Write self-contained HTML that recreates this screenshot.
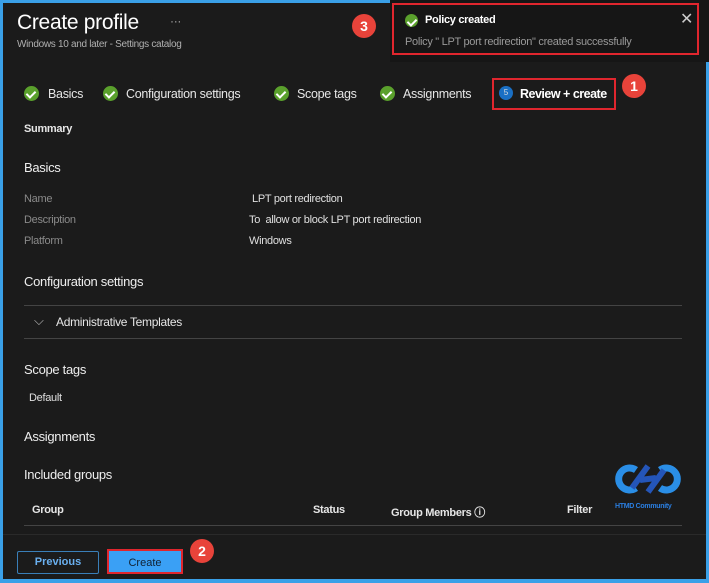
<!DOCTYPE html>
<html><head><meta charset="utf-8"><style>
*{margin:0;padding:0;box-sizing:border-box}
body{width:709px;height:583px;background:#3aa0e8;font-family:"Liberation Sans",sans-serif;position:relative;overflow:hidden;color:#e6e6e6}
.main{position:absolute;left:3px;top:3px;right:3px;bottom:4px;background:#1b1b1b}
.t{position:absolute;white-space:nowrap;letter-spacing:-0.3px}
.chk{position:absolute;width:15px;height:15px;border-radius:50%;background:#5aa02c}
.chk:after{content:"";position:absolute;left:4px;top:3px;width:4px;height:7px;border:solid #fff;border-width:0 2px 2px 0;transform:rotate(45deg)}
.badge{position:absolute;width:24px;height:24px;border-radius:50%;background:#e8433a;color:#fff;font-weight:bold;font-size:14px;text-align:center;line-height:24px}
.lbl{color:#8a8a8a;font-size:11px}
.val{color:#e0e0e0;font-size:11px}
.h{font-size:13px;color:#eee}
.line{position:absolute;height:1px;background:#444;left:24px;width:658px}
.red{position:absolute;border:2px solid #e0262e}
.st{font-size:12.5px}
</style></head><body>
<div class="main"></div>
<div class="t" style="left:17px;top:11px;font-size:21px;color:#fff">Create profile</div>
<div class="t" style="left:170px;top:14px;font-size:12px;color:#aaa">···</div>
<div class="t" style="left:17px;top:39px;font-size:10px;color:#b0b0b0">Windows 10 and later - Settings catalog</div>
<div class="badge" style="left:352px;top:14px">3</div>
<div style="position:absolute;left:390px;top:0;width:319px;height:62px;background:#161616"></div>
<div class="red" style="left:392px;top:3px;width:307px;height:52px"></div>
<div class="chk" style="left:405px;top:14px;width:13px;height:13px"></div>
<div class="t" style="left:425px;top:14px;font-size:11px;font-weight:bold;color:#fff">Policy created</div>
<div class="t" style="left:680px;top:9px;font-size:16px;color:#ccc">✕</div>
<div class="t" style="left:405px;top:36px;font-size:11px;color:#999">Policy " LPT port redirection" created successfully</div>

<div class="chk" style="left:24px;top:86px"></div><div class="t st" style="left:48px;top:87px">Basics</div>
<div class="chk" style="left:103px;top:86px"></div><div class="t st" style="left:126px;top:87px">Configuration settings</div>
<div class="chk" style="left:274px;top:86px"></div><div class="t st" style="left:297px;top:87px">Scope tags</div>
<div class="chk" style="left:380px;top:86px"></div><div class="t st" style="left:403px;top:87px">Assignments</div>
<div class="red" style="left:492px;top:78px;width:124px;height:32px"></div>
<div style="position:absolute;left:499px;top:86px;width:14px;height:14px;border-radius:50%;background:#1a6fc4;color:#ddd;font-size:8px;text-align:center;line-height:14px">5</div>
<div class="t" style="left:520px;top:87px;font-size:12.5px;font-weight:bold;color:#fff;letter-spacing:-0.5px">Review + create</div>
<div class="badge" style="left:622px;top:74px">1</div>

<div class="t" style="left:24px;top:123px;font-size:11px;font-weight:bold">Summary</div>
<div class="t h" style="left:24px;top:160px">Basics</div>
<div class="t lbl" style="left:24px;top:193px">Name</div><div class="t val" style="left:252px;top:193px">LPT port redirection</div>
<div class="t lbl" style="left:24px;top:214px">Description</div><div class="t val" style="left:249px;top:214px">To &nbsp;allow or block LPT port redirection</div>
<div class="t lbl" style="left:24px;top:235px">Platform</div><div class="t val" style="left:249px;top:235px">Windows</div>
<div class="t h" style="left:24px;top:274px">Configuration settings</div>
<div class="line" style="top:305px"></div>
<div class="t" style="left:34px;top:313px;font-size:13px;color:#bbb">⌵</div>
<div class="t" style="left:56px;top:315px;font-size:12px">Administrative Templates</div>
<div class="line" style="top:338px"></div>
<div class="t h" style="left:24px;top:362px">Scope tags</div>
<div class="t val" style="left:29px;top:392px">Default</div>
<div class="t h" style="left:24px;top:429px">Assignments</div>
<div class="t h" style="left:24px;top:467px">Included groups</div>
<div class="t" style="left:32px;top:504px;font-size:11px;font-weight:bold">Group</div>
<div class="t" style="left:313px;top:504px;font-size:11px;font-weight:bold">Status</div>
<div class="t" style="left:391px;top:504px;font-size:11px;font-weight:bold">Group Members ⓘ</div>
<div class="t" style="left:567px;top:504px;font-size:11px;font-weight:bold">Filter</div>
<div class="line" style="top:525px"></div>
<svg style="position:absolute;left:614px;top:460px" width="70" height="40" viewBox="0 0 70 40">
<path d="M22 10 A11 11 0 1 0 22 28" fill="none" stroke="#2a8ee6" stroke-width="7"/>
<path d="M46 10 A11 11 0 1 1 46 28" fill="none" stroke="#2a8ee6" stroke-width="7"/>
<path d="M18 28 L34 6 M34 32 L50 10 M26 20 L42 18" stroke="#2455b8" stroke-width="6"/>
</svg>
<div class="t" style="left:615px;top:503px;font-size:7px;font-weight:bold;color:#2a7ee0">HTMD Community</div>
<div style="position:absolute;left:3px;top:534px;width:703px;height:1px;background:#2a2a2a"></div>
<div style="position:absolute;left:17px;top:551px;width:82px;height:23px;border:1px solid #3a7fb8;border-radius:2px;color:#6ab0f0;font-size:11px;font-weight:bold;text-align:center;line-height:21px">Previous</div>
<div class="red" style="left:107px;top:549px;width:76px;height:25px;background:#3aa0f5;color:#123;font-size:11px;text-align:center;line-height:25px">Create</div>
<div class="badge" style="left:190px;top:539px">2</div>
</body></html>
